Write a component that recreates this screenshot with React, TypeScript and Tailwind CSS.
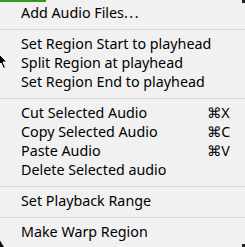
import React from 'react';

type Item = { label: string; shortcut?: string } | 'sep';

const items: Item[] = [
  { label: 'Add Audio Files' },
  'sep',
  { label: 'Set Region Start to playhead' },
  { label: 'Split Region at playhead' },
  { label: 'Set Region End to playhead' },
  'sep',
  { label: 'Cut Selected Audio', shortcut: '⌘X' },
  { label: 'Copy Selected Audio', shortcut: '⌘C' },
  { label: 'Paste Audio', shortcut: '⌘V' },
  { label: 'Delete Selected audio' },
  'sep',
  { label: 'Set Playback Range' },
  'sep',
  { label: 'Make Warp Region' },
];

export default function App() {
  return (
    <div
      className="relative w-[245px] h-[247px] overflow-hidden bg-[#f1f1f1] text-black"
      style={{ fontFamily: '"Noto Sans", "DejaVu Sans", sans-serif' }}
    >
      {/* green strip of the window behind */}
      <div className="absolute left-0 top-0 w-[46px] h-[2px] bg-[#2f9a20]" />
      <div className="absolute right-0 top-0 w-[3px] h-[3px] bg-[#222]" />
      <div className="absolute right-0 bottom-0 w-[3px] h-[3px] bg-[#222]" />

      <div className="flex flex-col pt-[4px]">
        {items.map((item, i) =>
          item === 'sep' ? (
            <div key={i} className="h-[12px] flex items-center">
              <div className="w-full h-px bg-[#d6d6d6]" />
            </div>
          ) : (
            <div key={i} className="h-[19px] flex items-center pl-[21px] pr-[12px] text-[14.3px] leading-none">
              <span className="flex-1 whitespace-nowrap">
                {item.label}
                {i === 0 && <span className="tracking-[1.5px]">...</span>}
              </span>
              {item.shortcut && <span className="w-[26px] whitespace-nowrap">{item.shortcut}</span>}
            </div>
          )
        )}
      </div>

      {/* mouse pointer */}
      <svg className="absolute left-[-3px] top-[52px]" width="12" height="18" viewBox="0 0 12 18">
        <path d="M1 1 L1 14 L4 11 L6.5 16.5 L8.5 15.5 L6 10 L10 10 Z" fill="#000" stroke="#fff" strokeWidth="1" />
      </svg>
      <svg className="absolute left-[-2px] top-[238px]" width="10" height="10" viewBox="0 0 10 10">
        <path d="M1 1 L6 9 L1 9 Z" fill="#111" />
      </svg>
    </div>
  );
}
